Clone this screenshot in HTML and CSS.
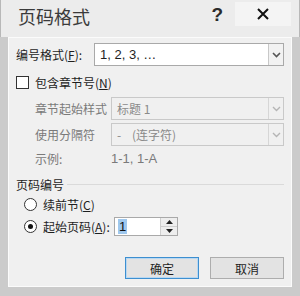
FILE: index.html
```html
<!DOCTYPE html>
<html lang="zh-CN">
<head>
    <meta charset="UTF-8">
    <title>页码格式</title>
    <link rel="stylesheet" href="styles.css">
</head>
<body>
    <div class="window">
        <div class="titlebar">
            <span class="title">页码格式</span>
            <span class="help">?</span>
            <span class="close">
                <svg width="14" height="14" viewBox="0 0 14 14"><path d="M2 2 L12 12 M12 2 L2 12" stroke="#111" stroke-width="2"/></svg>
            </span>
        </div>
        <div class="panel">
            <div class="row row-format">
                <span class="label">编号格式(<u>F</u>):</span>
                <div class="select wide">
                    <span class="value">1, 2, 3, …</span>
                    <span class="arrow"><svg width="9" height="6" viewBox="0 0 9 6"><path d="M1 1 L4.5 4.5 L8 1" fill="none" stroke="#555" stroke-width="1.6"/></svg></span>
                </div>
            </div>
            <div class="row row-check">
                <span class="checkbox"></span>
                <span class="text">包含章节号(<u>N</u>)</span>
            </div>
            <div class="row row-style disabled">
                <span class="label sub">章节起始样式</span>
                <div class="select off">
                    <span class="value">标题 1</span>
                    <span class="arrow"><svg width="9" height="6" viewBox="0 0 9 6"><path d="M1 1 L4.5 4.5 L8 1" fill="none" stroke="#b5b5b5" stroke-width="1.4"/></svg></span>
                </div>
            </div>
            <div class="row row-sep disabled">
                <span class="label sub">使用分隔符</span>
                <div class="select off">
                    <span class="value">-&nbsp;&nbsp;&nbsp;&nbsp;(连字符)</span>
                    <span class="arrow"><svg width="9" height="6" viewBox="0 0 9 6"><path d="M1 1 L4.5 4.5 L8 1" fill="none" stroke="#b5b5b5" stroke-width="1.4"/></svg></span>
                </div>
            </div>
            <div class="row row-sample disabled">
                <span class="label sub">示例:</span>
                <span class="sample">1-1, 1-A</span>
            </div>
            <div class="group">
                <span class="group-title">页码编号</span>
                <span class="group-line"></span>
            </div>
            <div class="row row-radio">
                <span class="radio"></span>
                <span class="text">续前节(<u>C</u>)</span>
            </div>
            <div class="row row-radio2">
                <span class="radio checked"></span>
                <span class="text">起始页码(<u>A</u>):</span>
                <div class="spin">
                    <span class="spin-value"><span class="selected">1</span></span>
                    <span class="spin-btns">
                        <span class="spin-btn"><svg width="7" height="4" viewBox="0 0 7 4"><path d="M0 4 L3.5 0 L7 4 Z" fill="#222"/></svg></span>
                        <span class="spin-btn"><svg width="7" height="4" viewBox="0 0 7 4"><path d="M0 0 L3.5 4 L7 0 Z" fill="#222"/></svg></span>
                    </span>
                </div>
            </div>
            <div class="buttons">
                <button class="btn default">确定</button>
                <button class="btn">取消</button>
            </div>
        </div>
    </div>
</body>
</html>
```

FILE: styles.css
```css
body {
    margin: 0;
    font-family: "Noto Sans CJK SC", "Liberation Sans", sans-serif;
    font-size: 12px;
    color: #1e1e1e;
    background-color: #c9c9c9;
}
u {
    text-decoration: underline;
    text-underline-offset: 1px;
}
.window {
    width: 300px;
    height: 296px;
    box-sizing: border-box;
    padding: 0 8px 9px 8px;
    background-color: #cbcbcb;
    display: flex;
    flex-direction: column;
}
.titlebar {
    height: 37px;
    background-color: #ececec;
    display: flex;
    align-items: flex-start;
    margin: 0 -8px;
    padding: 0 8px;
    border-left: 1px solid #b8b8b8;
    border-right: 1px solid #b8b8b8;
}
.title {
    font-size: 18px;
    color: #3a3a3a;
    margin-left: 9px;
    margin-top: 5px;
    line-height: 22px;
    flex: 1;
}
.help {
    font-family: "Liberation Sans", sans-serif;
    font-size: 19px;
    font-weight: bold;
    color: #2a2a2a;
    margin-top: 5px;
    line-height: 20px;
    margin-right: 12px;
}
.close {
    width: 56px;
    height: 24px;
    margin-top: 2px;
    background-color: #f4f4f4;
    display: flex;
    align-items: center;
    justify-content: center;
}
.panel {
    flex: 1;
    background-color: #f0f0f0;
    border: 1px solid #fbfbfb;
    padding: 5px 7px 0 7px;
    display: flex;
    flex-direction: column;
}
.row {
    display: flex;
    align-items: center;
}
.label {
    width: 78px;
    white-space: nowrap;
}
.label.sub {
    width: 76px;
    margin-left: 19px;
}
.disabled {
    color: #7a7a7a;
}
.select {
    flex: 1;
    height: 23px;
    box-sizing: border-box;
    border: 1px solid #a9a9a9;
    background-color: #fff;
    display: flex;
    align-items: center;
}
.select .value {
    flex: 1;
    padding-left: 5px;
    font-family: "Liberation Sans", "Noto Sans CJK SC", sans-serif;
    font-size: 13px;
}
.select .arrow {
    width: 15px;
    height: 100%;
    box-sizing: border-box;
    border-left: 1px solid #c8c8c8;
    background-color: #f2f2f2;
    display: flex;
    align-items: center;
    justify-content: center;
}
.select.off {
    height: 23px;
    border-color: #c9c9c9;
    background-color: #f0f0f0;
}
.select.off .value {
    font-family: "Noto Sans CJK SC", "Liberation Sans", sans-serif;
    font-size: 12px;
    color: #8a8a8a;
}
.select.off .arrow {
    border-left-color: #d6d6d6;
    background-color: #f0f0f0;
}
.row-format {
    margin-top: 0;
}
.row-check {
    margin-top: 9px;
    height: 14px;
}
.checkbox {
    width: 11px;
    height: 11px;
    border: 1px solid #333;
    background-color: #fff;
    margin-right: 6px;
}
.row-style {
    margin-top: 8px;
}
.row-sep {
    margin-top: 3px;
}
.row-sample {
    margin-top: 5px;
    height: 14px;
}
.sample {
    font-family: "Liberation Sans", sans-serif;
    font-size: 13px;
    color: #7a7a7a;
}
.group {
    display: flex;
    align-items: center;
    margin-top: 12px;
    height: 14px;
}
.group-title {
    margin-right: 3px;
}
.group-line {
    flex: 1;
    height: 1px;
    background-color: #dadada;
}
.row-radio {
    margin-top: 6px;
    height: 14px;
}
.radio {
    width: 11px;
    height: 11px;
    border: 1px solid #333;
    border-radius: 50%;
    background-color: #fff;
    margin-left: 8px;
    margin-right: 6px;
    display: flex;
    align-items: center;
    justify-content: center;
}
.radio.checked::after {
    content: "";
    width: 5px;
    height: 5px;
    border-radius: 50%;
    background-color: #111;
}
.row-radio2 {
    margin-top: 6px;
    height: 19px;
}
.row-radio2 .text {
    width: 71px;
}
.spin {
    width: 64px;
    height: 19px;
    box-sizing: border-box;
    border: 1px solid #a9a9a9;
    background-color: #fff;
    display: flex;
}
.spin-value {
    flex: 1;
    padding-left: 3px;
    display: flex;
    align-items: center;
    font-family: "Liberation Sans", sans-serif;
    font-size: 13px;
}
.selected {
    background-color: #9fc8ee;
    color: #111;
    line-height: 15px;
    padding: 0 1px;
}
.spin-btns {
    width: 16px;
    display: flex;
    flex-direction: column;
    border-left: 1px solid #cfcfcf;
}
.spin-btn {
    flex: 1;
    display: flex;
    align-items: center;
    justify-content: center;
    background-color: #eeeeee;
}
.spin-btn + .spin-btn {
    border-top: 1px solid #cfcfcf;
}
.buttons {
    display: flex;
    justify-content: flex-end;
    gap: 11px;
    margin-top: 21px;
}
.btn {
    width: 74px;
    height: 22px;
    font-family: "Noto Sans CJK SC", sans-serif;
    font-size: 12px;
    color: #1e1e1e;
    background-color: #e3e3e3;
    border: 1px solid #adadad;
    padding: 0;
}
.btn.default {
    border-color: #3d8fd0;
    box-shadow: inset 0 0 0 1px #b9d8f2;
}
```
